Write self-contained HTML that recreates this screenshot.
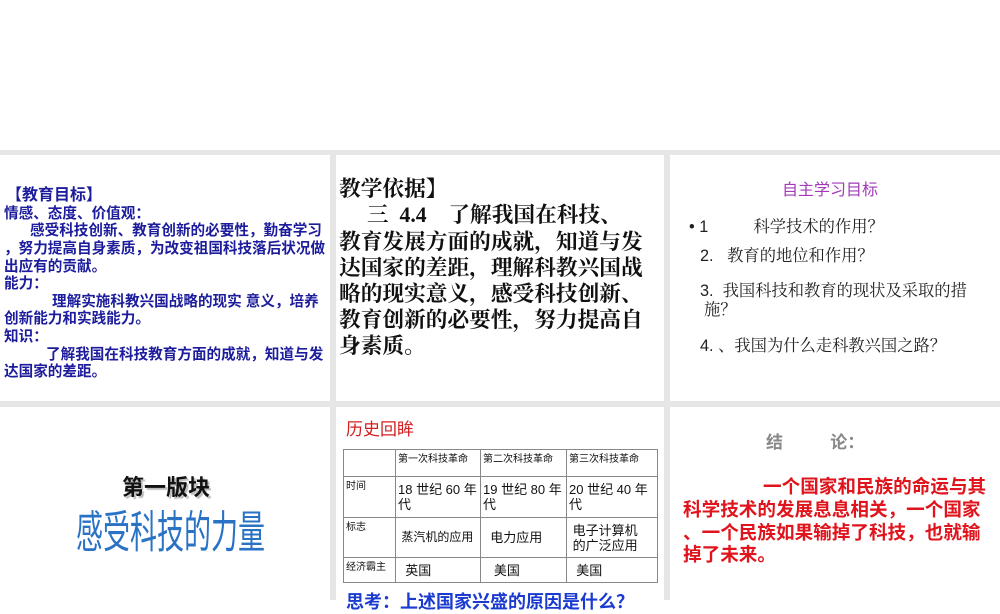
<!DOCTYPE html>
<html><head><meta charset="utf-8"><style>
body{margin:0;width:1000px;height:600px;position:relative;background:#fff;overflow:hidden;font-family:"Liberation Sans","Noto Sans CJK SC",sans-serif}
.g{position:absolute;background:#e6e6e6}
.t{position:absolute;white-space:nowrap}
.b1{color:#1c1c9c;font-weight:bold;font-size:14.6px}
.c2{color:#111;font-weight:bold;font-size:21.7px;font-family:"Liberation Serif","Noto Serif CJK SC",serif}
.c3{color:#222;font-size:16.3px;font-family:"Liberation Sans","Noto Serif CJK SC",serif}
.r{color:#e0141c;font-weight:bold;font-size:18.6px}
table{position:absolute;left:343px;top:449px;width:314px;height:134px;border-collapse:collapse;font-size:13px;color:#111;table-layout:fixed}
td{border:1px solid #888;vertical-align:middle;padding:0 2px;line-height:15px;overflow:hidden;white-space:nowrap}
td.s{font-size:10px;vertical-align:top;padding-top:2px}
</style></head><body>
<div class="g" style="left:0;top:150px;width:1000px;height:5px"></div>
<div class="g" style="left:0;top:401px;width:1000px;height:6px"></div>
<div class="g" style="left:330px;top:150px;width:6px;height:450px"></div>
<div class="g" style="left:664px;top:150px;width:6px;height:450px"></div>

<div class="t b1" style="left:6px;top:181px;font-size:16px">【教育目标】</div>
<div class="t b1" style="left:4px;top:202px">情感、态度、价值观：</div>
<div class="t b1" style="left:30px;top:219px">感受科技创新、教育创新的必要性，勤奋学习</div>
<div class="t b1" style="left:4px;top:237px">，努力提高自身素质，为改变祖国科技落后状况做</div>
<div class="t b1" style="left:4px;top:255px">出应有的贡献。</div>
<div class="t b1" style="left:4px;top:272px">能力：</div>
<div class="t b1" style="left:52px;top:290px">理解实施科教兴国战略的现实 意义，培养</div>
<div class="t b1" style="left:4px;top:307px">创新能力和实践能力。</div>
<div class="t b1" style="left:4px;top:325px">知识：</div>
<div class="t b1" style="left:46px;top:343px">了解我国在科技教育方面的成就，知道与发</div>
<div class="t b1" style="left:4px;top:360px">达国家的差距。</div>

<div class="t c2" style="left:339px;top:172px">教学依据】</div>
<div class="t c2" style="left:367px;top:198px">三&nbsp; 4.4&nbsp;&nbsp;&nbsp; 了解我国在科技、</div>
<div class="t c2" style="left:339px;top:225px">教育发展方面的成就，知道与发</div>
<div class="t c2" style="left:339px;top:251px">达国家的差距，理解科教兴国战</div>
<div class="t c2" style="left:339px;top:277px">略的现实意义，感受科技创新、</div>
<div class="t c2" style="left:339px;top:303px">教育创新的必要性，努力提高自</div>
<div class="t c2" style="left:339px;top:329px">身素质。</div>

<div class="t" style="left:782px;top:176px;font-size:16px;color:#a23ab8">自主学习目标</div>
<div class="t c3" style="left:689px;top:213px">• 1&nbsp;&nbsp;&nbsp;&nbsp;&nbsp;&nbsp;&nbsp;&nbsp;&nbsp;&nbsp;科学技术的作用？</div>
<div class="t c3" style="left:700px;top:242px">2.&nbsp;&nbsp; 教育的地位和作用？</div>
<div class="t c3" style="left:700px;top:277px">3.&nbsp; 我国科技和教育的现状及采取的措</div>
<div class="t c3" style="left:704px;top:296px">施？</div>
<div class="t c3" style="left:700px;top:332px">4. 、我国为什么走科教兴国之路？</div>

<div class="t" style="left:122px;top:470px;font-size:22px;font-weight:bold;color:#111;text-shadow:2px 2px 1px #bbb">第一版块</div>
<div class="t" style="left:76px;top:508px;font-size:27px;line-height:30px;color:#2a72c4;transform:scaleY(1.65);transform-origin:left top">感受科技的力量</div>

<div class="t" style="left:346px;top:415px;font-size:17px;color:#d42020">历史回眸</div>
<table>
<colgroup><col style="width:52px"><col style="width:85px"><col style="width:86px"><col style="width:91px"></colgroup>
<tr style="height:27px"><td class="s"></td><td class="s">第一次科技革命</td><td class="s">第二次科技革命</td><td class="s">第三次科技革命</td></tr>
<tr style="height:41px"><td class="s">时间</td><td>18 世纪 60 年<br>代</td><td>19 世纪 80 年<br>代</td><td>20 世纪 40 年<br>代</td></tr>
<tr style="height:40px"><td class="s">标志</td><td style="font-size:12px">&nbsp;蒸汽机的应用</td><td>&nbsp;&nbsp;电力应用</td><td>&nbsp;电子计算机<br>&nbsp;的广泛应用</td></tr>
<tr><td class="s">经济霸主</td><td>&nbsp;&nbsp;英国</td><td>&nbsp;&nbsp;&nbsp;美国</td><td>&nbsp;&nbsp;美国</td></tr>
</table>
<div class="t" style="left:346px;top:588px;font-size:18px;font-weight:bold;color:#1a3ad0">思考：上述国家兴盛的原因是什么？</div>

<div class="t" style="left:766px;top:428px;font-size:17px;font-weight:bold;color:#888">结&nbsp;&nbsp;&nbsp;&nbsp;&nbsp;&nbsp;&nbsp;&nbsp;&nbsp;&nbsp;论：</div>
<div class="t r" style="left:763px;top:472px">一个国家和民族的命运与其</div>
<div class="t r" style="left:683px;top:495px">科学技术的发展息息相关，一个国家</div>
<div class="t r" style="left:683px;top:518px">、一个民族如果输掉了科技，也就输</div>
<div class="t r" style="left:683px;top:540px">掉了未来。</div>
</body></html>
